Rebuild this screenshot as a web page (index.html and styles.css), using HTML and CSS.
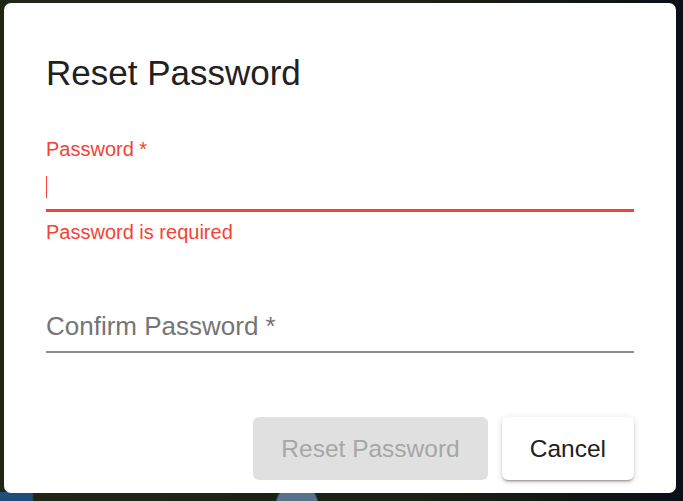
FILE: index.html
```html
<!DOCTYPE html>
<html lang="en">
<head>
    <meta charset="UTF-8">
    <title>Reset Password</title>
    <link rel="stylesheet" href="styles.css">
</head>

<body>
<div class="backdrop">
    <div class="dialog">
        <h2 class="dialogtitle">Reset Password</h2>

        <div class="field">
            <label class="fieldlabel err">Password *</label>
            <div class="inputbox inputerr">
                <span class="caret"></span>
            </div>
            <div class="helper err">Password is required</div>
        </div>

        <div class="field">
            <div class="inputbox inputplain">
                <span class="placeholder">Confirm Password *</span>
            </div>
        </div>

        <div class="actions">
            <button class="btn btndisabled" disabled>Reset Password</button>
            <button class="btn btnraised">Cancel</button>
        </div>
    </div>
</div>
</body>
</html>
```

FILE: styles.css
```css
html, body{
    margin:0;
    padding:0;
    height:100%;
}
body{
    font-family: "Liberation Sans", Arial, sans-serif;
    background:
        radial-gradient(circle at 297px 505px, #56728c 0, #56728c 20px, transparent 22px),
        linear-gradient(90deg, #1f4f78 0, #1f4f78 32px, transparent 34px) left bottom / 100% 9px no-repeat,
        linear-gradient(90deg, #1f2614 0, #1c2214 60%, #0b1017 99%);
}
.backdrop{
    height:100%;
    box-sizing: border-box;
    padding:3px 7px 8px 4px;
}
.dialog{
    width:672px;
    height:490px;
    box-sizing: border-box;
    background:#fff;
    border-radius:7px;
    padding:50px 42px 13px 42px;
    display:flex;
    flex-direction: column;
}
.dialogtitle{
    margin:0;
    font-size:35px;
    line-height:40px;
    font-weight: normal;
    color:#212121;
}

.field{
    display:flex;
    flex-direction: column;
}
.fieldlabel{
    margin-top:44px;
    font-size:20px;
    line-height:24px;
}
.err{
    color:#f44336;
}
.inputbox{
    display:flex;
    align-items: flex-end;
}
.inputerr{
    height:37px;
    padding-bottom:11px;
    border-bottom:3px solid #f44336;
}
.caret{
    width:1px;
    height:22px;
    background:#f44336;
}
.helper{
    margin-top:8px;
    font-size:20px;
    line-height:24px;
}
.inputplain{
    margin-top:67px;
    padding-bottom:10px;
    border-bottom:2px solid #8d8d8d;
}
.placeholder{
    font-size:26px;
    line-height:30px;
    color:#757575;
}

.actions{
    margin-top:64px;
    display:flex;
    justify-content: flex-end;
    gap:14px;
}
.btn{
    height:63px;
    padding:0 28px;
    border:none;
    border-radius:6px;
    font-family: "Liberation Sans", Arial, sans-serif;
    font-size:24.5px;
    cursor:pointer;
}
.btndisabled{
    background:#e0e0e0;
    color:#a6a6a6;
    cursor:default;
}
.btnraised{
    background:#fff;
    color:#212121;
    box-shadow: 0 3px 2px -2px rgba(0,0,0,0.25), 0 2px 3px 0 rgba(0,0,0,0.16), 0 1px 7px 0 rgba(0,0,0,0.12);
}
```
